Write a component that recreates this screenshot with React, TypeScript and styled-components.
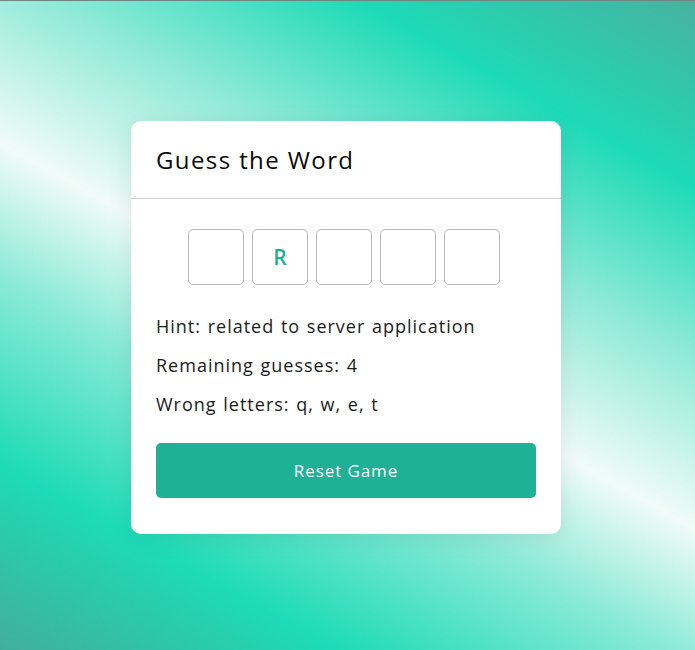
import styled, { createGlobalStyle } from "styled-components"

const GlobalStyle = createGlobalStyle`
  html, body {
    margin: 0;
    padding: 0;
  }
  body {
    font-family: "Open Sans", "Noto Sans", sans-serif;
  }
`

const Page = styled.div`
  min-height: 100vh;
  box-sizing: border-box;
  border-top: 1px solid #6f8581;
  padding: 3px 3px 0 0;
  display: flex;
  align-items: center;
  justify-content: center;
  background: linear-gradient(
    29deg,
    #42ae9a 0%,
    #1ddbb6 18%,
    #8aead7 36%,
    #f1fbf8 49%,
    #8ce9d6 66%,
    #1ddab6 82%,
    #48b29f 100%
  );
`

const Card = styled.div`
  width: 430px;
  background: #fff;
  border-radius: 10px;
  box-shadow: 0 4px 24px rgba(0, 0, 0, 0.08);
  overflow: hidden;
`

const Header = styled.div`
  height: 78px;
  box-sizing: border-box;
  padding: 0 25px;
  display: flex;
  align-items: center;
  border-bottom: 1px solid #cfcfcf;
`

const Title = styled.h1`
  margin: 0;
  font-size: 24px;
  font-weight: 400;
  letter-spacing: 1.4px;
  color: #0a0a0a;
`

const Body = styled.div`
  padding: 30px 25px 36px;
`

const Letters = styled.div`
  display: flex;
  justify-content: center;
  gap: 8px;
  padding-right: 4px;
  margin-bottom: 22px;
`

const Slot = styled.div`
  width: 56px;
  height: 56px;
  box-sizing: border-box;
  border: 1px solid #b9b9b9;
  border-radius: 5px;
  display: flex;
  align-items: center;
  justify-content: center;
  font-size: 21px;
  font-weight: 600;
  color: #1eb094;
`

const Info = styled.p`
  margin: 0;
  font-size: 18px;
  line-height: 39px;
  letter-spacing: 1px;
  word-spacing: 1px;
  color: #1b1b1b;
`

const ResetButton = styled.button`
  display: block;
  width: 100%;
  height: 55px;
  margin-top: 19px;
  border: none;
  border-radius: 5px;
  background: #1eb196;
  color: #fff;
  font-family: inherit;
  font-size: 17px;
  font-weight: 500;
  letter-spacing: 0.9px;
  cursor: pointer;
`

const word = ["", "R", "", "", ""]

export default function App() {
  return (
    <>
      <GlobalStyle />
      <Page>
        <Card>
          <Header>
            <Title>Guess the Word</Title>
          </Header>
          <Body>
            <Letters>
              {word.map((l, i) => (
                <Slot key={i}>{l}</Slot>
              ))}
            </Letters>
            <Info>Hint: related to server application</Info>
            <Info>Remaining guesses: 4</Info>
            <Info>Wrong letters: q, w, e, t</Info>
            <ResetButton>Reset Game</ResetButton>
          </Body>
        </Card>
      </Page>
    </>
  )
}
